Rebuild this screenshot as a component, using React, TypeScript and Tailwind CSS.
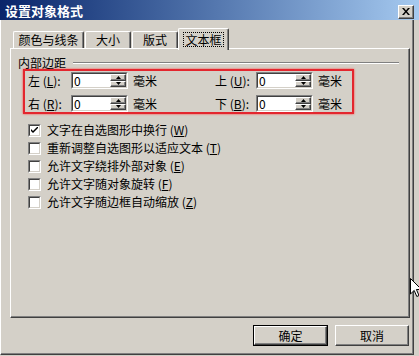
import React from 'react'

function Raised({ className = '', children }: { className?: string; children?: React.ReactNode }) {
  return (
    <div
      className={`border border-t-white border-l-white border-b-[#404040] border-r-[#404040] bg-[#d4d0c8] shadow-[inset_-1px_-1px_0_#808080] ${className}`}
    >
      {children}
    </div>
  )
}

function Spinner() {
  return (
    <div className="flex w-[16px] flex-col">
      <Raised className="flex flex-1 items-center justify-center">
        <svg width="5" height="3" viewBox="0 0 5 3">
          <path d="M2.5 0 L5 3 L0 3 Z" fill="#000" />
        </svg>
      </Raised>
      <Raised className="flex flex-1 items-center justify-center">
        <svg width="5" height="3" viewBox="0 0 5 3">
          <path d="M0 0 L5 0 L2.5 3 Z" fill="#000" />
        </svg>
      </Raised>
    </div>
  )
}

function NumField() {
  return (
    <div className="flex h-[17px] w-[57px] shrink-0 border border-t-[#808080] border-l-[#808080] border-b-white border-r-white">
      <div className="flex flex-1 border border-t-[#404040] border-l-[#404040] border-b-[#d4d0c8] border-r-[#d4d0c8] bg-white">
        <span className="flex-1 pl-[1px] text-[12px] leading-[13px]">0</span>
        <Spinner />
      </div>
    </div>
  )
}

function MarginCell({ label, letter, labelW, w }: { label: string; letter: string; labelW: string; w: string }) {
  return (
    <div className={`flex shrink-0 items-center ${w}`}>
      <span className={`${labelW} shrink-0 whitespace-nowrap text-[12px] leading-[14px]`}>
        {label} (<span className="underline">{letter}</span>):
      </span>
      <NumField />
      <span className="ml-[5px] whitespace-nowrap text-[12px] leading-[14px]">毫米</span>
    </div>
  )
}

function Check({ checked, text, letter }: { checked?: boolean; text: string; letter: string }) {
  return (
    <div className="flex h-[18px] items-center">
      <div className="h-[13px] w-[13px] border border-t-[#808080] border-l-[#808080] border-b-white border-r-white">
        <div className="flex h-full w-full items-center justify-center border border-t-[#404040] border-l-[#404040] border-b-[#d4d0c8] border-r-[#d4d0c8] bg-white">
          {checked && (
            <svg width="7" height="7" viewBox="0 0 7 7">
              <path d="M0 2 L0 4 L2 6 L7 1 L7 -1 L2 4 Z" fill="#000" />
            </svg>
          )}
        </div>
      </div>
      <span className="ml-[6px] whitespace-nowrap text-[12px] leading-[14px]">
        {text} (<span className="underline">{letter}</span>)
      </span>
    </div>
  )
}

export default function App() {
  const tabs = [
    { label: '颜色与线条', w: 'w-[71px]', ml: 'ml-[3px]' },
    { label: '大小', w: 'w-[46px]', ml: 'ml-[1px]' },
    { label: '版式', w: 'w-[46px]', ml: 'ml-[1px]' },
  ]

  return (
    <div className="relative flex h-[356px] w-[419px] flex-col overflow-hidden bg-[#d4d0c8] font-['Noto_Sans_CJK_SC',sans-serif] text-black">
      {/* Title bar */}
      <div className="flex h-[20px] items-center justify-between bg-linear-to-r from-[#0a246a] to-[#a6caf0] pl-[5px] pr-[5px]">
        <span className="pt-[1px] text-[13px] font-bold leading-[13px] text-white">设置对象格式</span>
        <Raised className="mt-[3px] flex h-[14px] w-[16px] items-center justify-center">
          <svg width="8" height="7" viewBox="0 0 8 7">
            <path d="M0 0 H2 L4 2.5 L6 0 H8 L5 3.5 L8 7 H6 L4 4.5 L2 7 H0 L3 3.5 Z" fill="#000" />
          </svg>
        </Raised>
      </div>

      {/* Window body */}
      <div className="flex flex-1">
        <div className="h-[335px] w-[414px] border-l border-b border-r border-l-white border-b-[#404040] border-r-[#404040] pl-[9px] pt-[8px] shadow-[inset_-1px_-1px_0_#808080]">
          {/* Tabs */}
          <div className="flex h-[20px] items-end">
            {tabs.map((t) => (
              <div
                key={t.label}
                className={`${t.w} ${t.ml} flex h-[17px] items-center justify-center rounded-t-[2px] border-t border-l border-r border-t-white border-l-white border-r-[#404040] shadow-[inset_-1px_0_0_#808080] text-[12px] leading-[14px]`}
              >
                {t.label}
              </div>
            ))}
            <div className="relative z-10 mb-[-2px] flex h-[22px] w-[51px] items-start justify-center rounded-t-[2px] border-t border-l border-r border-t-white border-l-white border-r-[#404040] bg-[#d4d0c8] pt-[3px] shadow-[inset_-1px_0_0_#808080]">
              <span className="border border-dotted border-black px-[1px] text-[12px] leading-[13px]">文本框</span>
            </div>
          </div>

          {/* Panel */}
          <div className="h-[270px] w-[400px] border border-t-white border-l-white border-b-[#404040] border-r-[#404040] pl-[7px] pt-[8px] shadow-[inset_-1px_-1px_0_#808080]">
            <div className="flex h-[12px] items-center">
              <span className="text-[12px] leading-[12px]">内部边距</span>
              <div className="ml-[7px] mr-[10px] h-[2px] flex-1 border-t border-b border-t-[#808080] border-b-white" />
            </div>

            <div className="ml-[5px] flex h-[45px] w-[331px] flex-col gap-[6px] border-2 border-[#e3262e] pl-[3px] pt-[1px] shadow-[0_0_2px_#ff4040]">
              <div className="flex">
                <MarginCell label="左" letter="L" labelW="w-[43px]" w="w-[187px]" />
                <MarginCell label="上" letter="U" labelW="w-[41px]" w="w-[130px]" />
              </div>
              <div className="flex">
                <MarginCell label="右" letter="R" labelW="w-[43px]" w="w-[187px]" />
                <MarginCell label="下" letter="B" labelW="w-[41px]" w="w-[130px]" />
              </div>
            </div>

            <div className="ml-[10px] mt-[7px] flex flex-col">
              <Check checked text="文字在自选图形中换行" letter="W" />
              <Check text="重新调整自选图形以适应文本" letter="T" />
              <Check text="允许文字绕排外部对象" letter="E" />
              <Check text="允许文字随对象旋转" letter="F" />
              <Check text="允许文字随边框自动缩放" letter="Z" />
            </div>
          </div>

          {/* Buttons */}
          <div className="mt-[7px] flex w-[400px] justify-end gap-[7px] pr-[1px]">
            <div className="h-[21px] w-[75px] border border-black">
              <Raised className="flex h-full w-full items-center justify-center text-[12px] leading-[14px]">确定</Raised>
            </div>
            <Raised className="flex h-[21px] w-[74px] items-center justify-center text-[12px] leading-[14px]">取消</Raised>
          </div>
        </div>
      </div>

      {/* Mouse cursor */}
      <svg className="absolute left-[410px] top-[278px]" width="12" height="20" viewBox="0 0 12 20">
        <path d="M0.5 0.5 L0.5 16 L4.2 12.4 L6.8 18.5 L9 17.5 L6.4 11.5 L11.5 11.5 Z" fill="#fff" stroke="#000" strokeWidth="1" />
      </svg>
    </div>
  )
}
